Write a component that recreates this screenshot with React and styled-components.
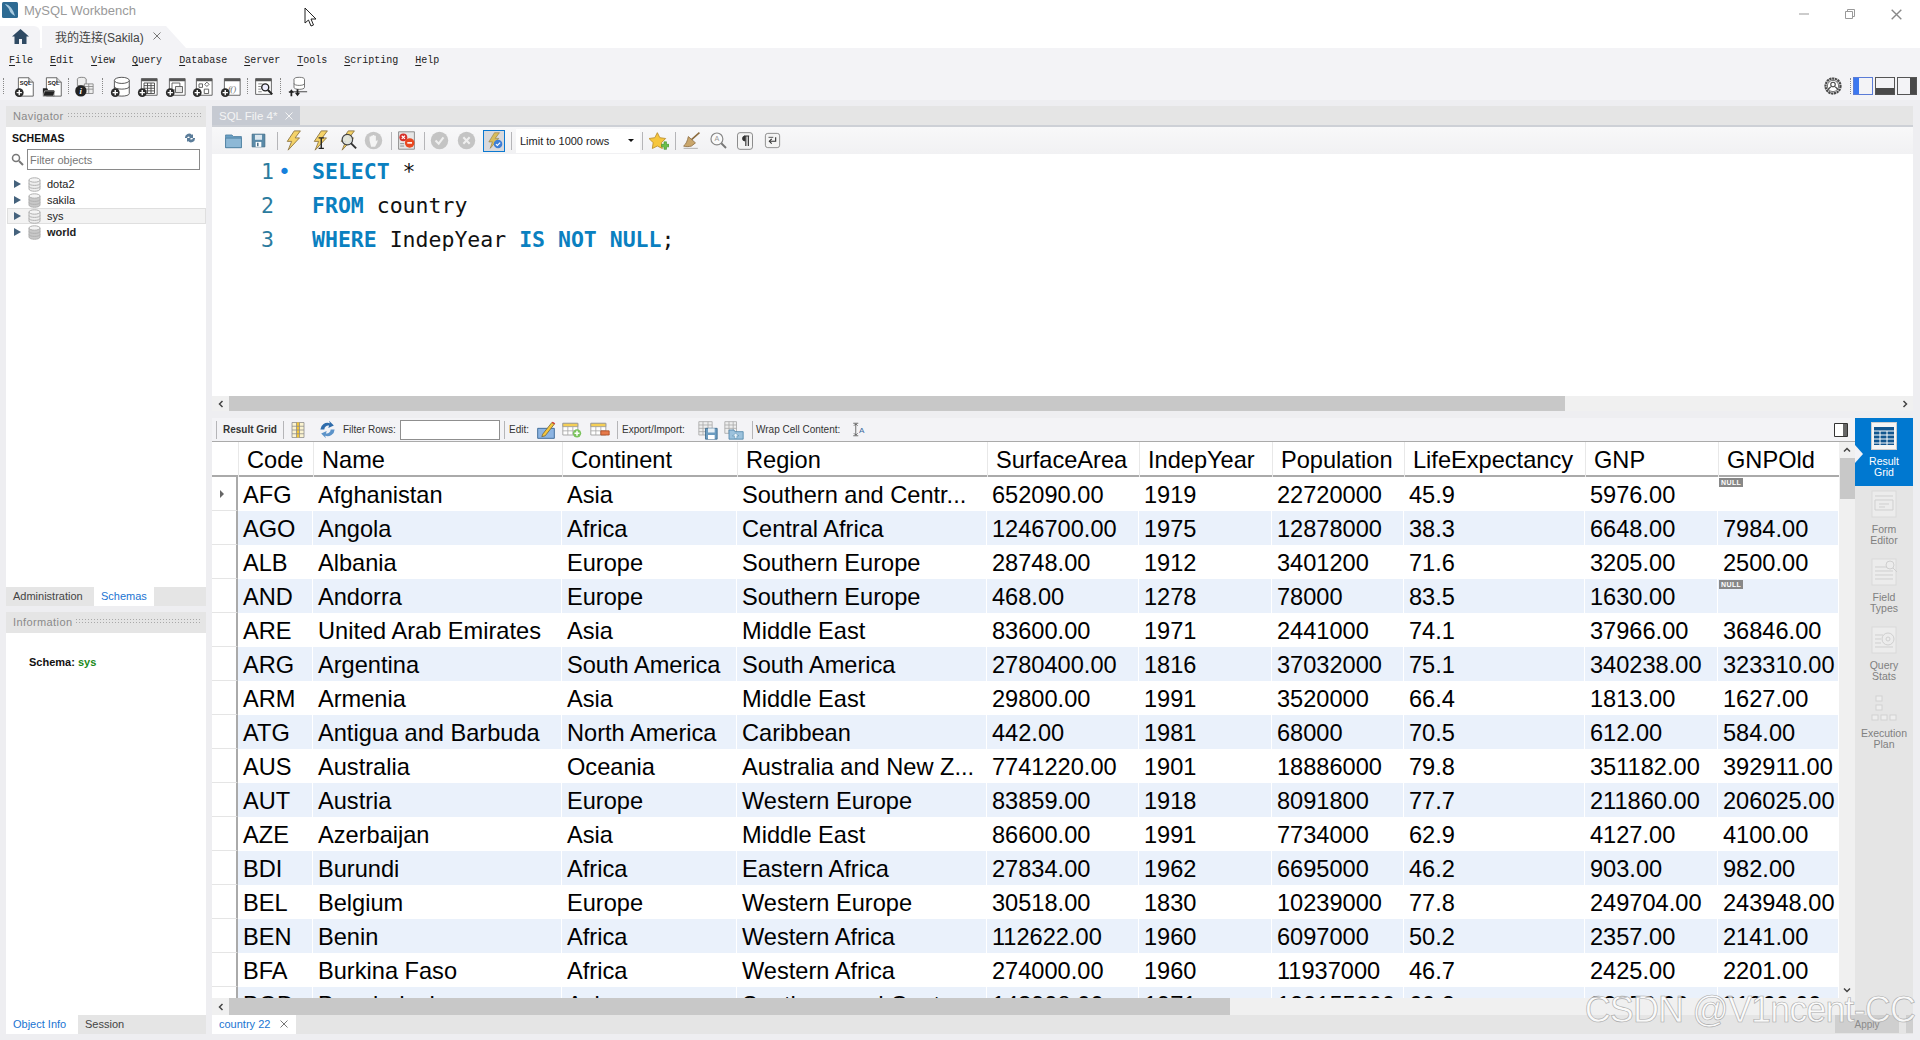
import React from 'react'
import styled, { createGlobalStyle } from 'styled-components'

const UI = '"Liberation Sans", "Noto Sans CJK SC", sans-serif'
const GRID_COLS = '26px 75px 249px 175px 250px 152px 133px 132px 181px 133px 121px'

const Global = createGlobalStyle`
    html, body { margin: 0; padding: 0; background: #eeeef1; }
    body { font-family: ${UI}; overflow: hidden; }
    * { box-sizing: border-box; }
`

const Page = styled.div`
    width: 1920px;
    height: 1040px;
    display: flex;
    flex-direction: column;
    position: relative;
    overflow: hidden;
    background: #eeeef1;
`, TitleBar = styled.div`
    height: 26px;
    display: flex;
    align-items: center;
    background: #fff;
    padding: 0 1px 6px 2px;
`, AppTitle = styled.div`
    margin-left: 6px;
    font-size: 13px;
    color: #9a9a9a;
`, WinControls = styled.div`
    margin-left: auto;
    display: flex;
`, WinBtn = styled.div`
    width: 46px;
    height: 28px;
    display: flex;
    align-items: center;
    justify-content: center;
    margin-top: 8px;
`, TabStrip = styled.div`
    height: 22px;
    display: flex;
    align-items: flex-end;
    background: #fff;
`, HomeTab = styled.div`
    width: 40px;
    height: 22px;
    padding-bottom: 2px;
    background: #f3f3f6;
    border-top-right-radius: 6px;
    display: flex;
    align-items: center;
    justify-content: center;
`, ConnTab = styled.div`
    width: 144px;
    height: 22px;
    margin-left: 2px;
    padding: 0 0 2px 13px;
    background: #f3f3f6;
    clip-path: polygon(0 0, 124px 0, 100% 100%, 0 100%);
    display: flex;
    align-items: center;
    font-size: 12px;
    color: #444;
`, TabClose = styled.span`
    margin-left: ${p => p.$l || 8}px;
    display: inline-flex;
`, MenuBar = styled.div`
    height: 24px;
    padding-left: 9px;
    display: flex;
    align-items: center;
    gap: 17px;
    background: #f3f3f6;
    font-family: "Liberation Mono", monospace;
    font-size: 10px;
    color: #222;
    span u { text-underline-offset: 2px; }
`, MainToolbar = styled.div`
    height: 28px;
    display: flex;
    align-items: center;
    padding: 0 3px;
    background: #f3f3f6;
`, Grip = styled.div`
    width: 1px;
    height: 16px;
    margin-left: ${p => p.$l || 0}px;
    border-left: 1px dotted #888;
`, Sep = styled.div`
    width: 1px;
    height: ${p => p.$h || 18}px;
    margin-left: ${p => p.$l || 0}px;
    background: #b5b5b8;
`, Slot = styled.div`
    width: ${p => p.$w || 27}px;
    margin-left: ${p => p.$l || 0}px;
    display: flex;
    align-items: center;
    justify-content: center;
    flex: none;
`, RightTools = styled.div`
    margin-left: auto;
    display: flex;
    align-items: center;
    gap: 2px;
`, Body = styled.div`
    flex: 1;
    display: flex;
    gap: 6px;
    padding: 6px 7px 6px 6px;
    min-height: 0;
`, LeftCol = styled.div`
    width: 200px;
    display: flex;
    flex-direction: column;
`, PaneHeader = styled.div`
    height: 21px;
    flex: none;
    display: flex;
    align-items: center;
    gap: 3px;
    padding: 0 5px 2px 7px;
    background: #e5e5e5;
    font-size: 11px;
    color: #8a8a8a;
    letter-spacing: 0.4px;
`, Dots = styled.div`
    flex: 1;
    height: 7px;
    background-image: radial-gradient(#a9a9a9 0.7px, transparent 0.8px);
    background-size: 3px 3px;
`, SchemaPanel = styled.div`
    height: 460px;
    flex: none;
    background: #fff;
    display: flex;
    flex-direction: column;
`, SchemaHead = styled.div`
    height: 22px;
    padding: 0 10px 0 6px;
    display: flex;
    align-items: center;
    justify-content: space-between;
    font-size: 10.5px;
    font-weight: bold;
    color: #111;
`, FilterRow = styled.div`
    height: 21px;
    display: flex;
    align-items: center;
    padding: 0 6px 0 5px;
    gap: 3px;
`, FilterInput = styled.div`
    flex: 1;
    height: 21px;
    padding-left: 2px;
    border: 1px solid #8a8a8a;
    font-size: 11px;
    line-height: 20px;
    color: #777;
`, Tree = styled.div`
    margin-top: 6px;
`, TreeRow = styled.div`
    height: 16px;
    display: flex;
    align-items: center;
    padding-left: 7px;
    gap: 6px;
    font-size: 11px;
    color: #222;
    font-weight: ${p => p.$bold ? 'bold' : 'normal'};
    background: ${p => p.$sel ? '#f3f3f3' : 'transparent'};
    box-shadow: ${p => p.$sel ? 'inset 0 0 0 1px #dfdfdf' : 'none'};
    margin-left: 1px;
`, TreeArrow = styled.div`
    width: 0;
    height: 0;
    margin-right: 1px;
    border-left: 7px solid #45627c;
    border-top: 4px solid transparent;
    border-bottom: 4px solid transparent;
`, SubTabs = styled.div`
    height: 19px;
    flex: none;
    display: flex;
    background: #e5e5e5;
    font-size: 11px;
`, SubTab = styled.div`
    width: ${p => p.$w}px;
    padding: 0 0 1px 7px;
    display: flex;
    align-items: center;
    white-space: nowrap;
    background: ${p => p.$on ? '#fff' : 'transparent'};
    color: ${p => p.$on ? '#1a74d2' : '#444'};
`, Spacer = styled.div`
    height: 6px;
    flex: none;
`, InfoBody = styled.div`
    flex: 1;
    background: #fff;
    padding: 23px 0 0 23px;
    font-size: 11px;
    font-weight: bold;
    color: #111;
    b { color: #1b8a1b; }
`, MainCol = styled.div`
    flex: 1;
    min-width: 0;
    display: flex;
    flex-direction: column;
`, SqlTabBar = styled.div`
    height: 21px;
    flex: none;
    background: #e5e5e5;
    border-bottom: 2px solid #cdd0d6;
`, SqlTab = styled.div`
    width: 88px;
    height: 19px;
    padding-left: 7px;
    display: flex;
    align-items: center;
    background: #c6cad2;
    color: #f4f4f4;
    font-size: 11.5px;
`, SqlToolbar = styled.div`
    height: 27px;
    flex: none;
    display: flex;
    align-items: center;
    padding-left: 8px;
    background: linear-gradient(#f8f8f9, #f1f1f3);
`, Toggle = styled.div`
    width: 22px;
    height: 22px;
    margin-left: 3px;
    display: flex;
    align-items: center;
    justify-content: center;
    border: 1px solid #0b78d0;
    background: #d9d9dc;
`, Combo = styled.div`
    width: 124px;
    height: 24px;
    margin-left: 4px;
    padding: 0 6px 0 4px;
    display: flex;
    align-items: center;
    justify-content: space-between;
    background: #fff;
    font-size: 11px;
    color: #222;
`, ComboArrow = styled.div`
    width: 0;
    height: 0;
    border-top: 3px solid #111;
    border-left: 3px solid transparent;
    border-right: 3px solid transparent;
`, Editor = styled.div`
    height: 242px;
    flex: none;
    padding-top: 1px;
    background: #fff;
    font-family: "DejaVu Sans Mono", monospace;
    font-size: 21.5px;
    line-height: 34px;
`, CodeLine = styled.div`
    display: flex;
    white-space: pre;
    color: #111;
    b { color: #0a80c0; }
`, LineNo = styled.span`
    width: 62px;
    text-align: right;
    color: #2b7b9e;
    font-weight: normal;
`, LineDot = styled.span`
    width: 38px;
    padding-left: 4px;
    color: #1580dc;
`, HScroll = styled.div`
    height: ${p => p.$h || 15}px;
    flex: none;
    display: flex;
    align-items: stretch;
    background: #f0f0f0;
`, ScrollArrow = styled.div`
    width: 17px;
    flex: none;
    display: flex;
    align-items: center;
    justify-content: center;
`, ScrollThumb = styled.div`
    width: ${p => p.$w}px;
    background: #c8c8c8;
`, ResultsArea = styled.div`
    flex: 1;
    min-height: 0;
    margin-top: 7px;
    display: flex;
`, ResultsMain = styled.div`
    flex: 1;
    min-width: 0;
    display: flex;
    flex-direction: column;
`, ResultToolbar = styled.div`
    height: 24px;
    flex: none;
    display: flex;
    align-items: center;
    background: #f3f3f6;
    border-bottom: 1px solid #aaa;
    padding-right: 7px;
`, BarLabel = styled.div`
    width: ${p => p.$w}px;
    margin-left: ${p => p.$l || 0}px;
    flex: none;
    white-space: nowrap;
    font-size: 10px;
    font-weight: ${p => p.$bold ? 'bold' : 'normal'};
    color: #333;
`, FilterBox = styled.div`
    width: 100px;
    height: 20px;
    margin-left: 5px;
    flex: none;
    background: #fff;
    border: 1px solid #8f8f8f;
`, GridWrap = styled.div`
    flex: 1;
    min-height: 0;
    display: flex;
`, Grid = styled.div`
    width: 1627px;
    overflow: hidden;
    background: #fff;
    font-family: "Liberation Sans", sans-serif;
    font-size: 23.6px;
    color: #000;
`, HeadRow = styled.div`
    height: 35px;
    display: grid;
    grid-template-columns: ${GRID_COLS};
    border-bottom: 2px solid #aaa;
`, HeadCell = styled.div`
    padding-left: 8px;
    line-height: 36px;
    white-space: nowrap;
    border-left: 1px solid #e8e8e8;
`, DataRow = styled.div`
    height: 34px;
    display: grid;
    grid-template-columns: ${GRID_COLS};
`, RowHead = styled.div`
    display: flex;
    align-items: center;
    padding-left: 8px;
    border-bottom: 1px solid #e5e5e5;
    border-right: 2px solid #aaa;
    background: #fff;
`, RowMark = styled.div`
    width: 0;
    height: 0;
    border-left: 4px solid #666;
    border-top: 4px solid transparent;
    border-bottom: 4px solid transparent;
`, Cell = styled.div`
    padding: 2px 0 0 5px;
    display: flex;
    align-items: center;
    white-space: nowrap;
    overflow: hidden;
    background: ${p => p.$alt ? '#eaf1fb' : '#fff'};
    border-right: 1px solid #fff;
`, NullBadge = styled.span`
    align-self: flex-start;
    margin: -1px 0 0 -4px;
    padding: 0 2px;
    height: 9px;
    line-height: 9px;
    background: #888;
    color: #fff;
    font-size: 7px;
    font-weight: bold;
    letter-spacing: 0.4px;
`, VScroll = styled.div`
    width: 16px;
    flex: none;
    display: flex;
    flex-direction: column;
    align-items: center;
    background: #f0f0f0;
`, VArrow = styled.div`
    height: 16px;
    flex: none;
    display: flex;
    align-items: center;
    justify-content: center;
`, VThumb = styled.div`
    width: 15px;
    height: 41px;
    background: #c8c8c8;
`, VFill = styled.div`
    flex: 1;
`, SidePanel = styled.div`
    width: 58px;
    flex: none;
    background: #e5e5e5;
`, SideItem = styled.div`
    height: 68px;
    display: flex;
    flex-direction: column;
    align-items: center;
    position: relative;
    padding-top: 4px;
    background: ${p => p.$on ? '#0078d0' : 'transparent'};
    color: ${p => p.$on ? '#fff' : '#808080'};
    font-size: 10.5px;
    line-height: 10.5px;
    text-align: center;
`, SideLabel = styled.div`
    margin-top: 6px;
`, Notch = styled.div`
    position: absolute;
    left: 0;
    top: 27px;
    width: 0;
    height: 0;
    border-left: 8px solid #f3f3f6;
    border-top: 9px solid transparent;
    border-bottom: 9px solid transparent;
`, BottomBar = styled.div`
    height: 19px;
    flex: none;
    display: flex;
    background: #e5e5e5;
`, ResultTab = styled.div`
    width: 84px;
    padding: 0 0 1px 7px;
    display: flex;
    align-items: center;
    background: #fff;
    color: #1a74d2;
    font-size: 11px;
`, ApplyBtn = styled.div`
    width: 64px;
    height: 18px;
    margin-left: auto;
    display: flex;
    align-items: center;
    justify-content: center;
    background: #cfcfcf;
    color: #8a8a8a;
    font-size: 10px;
`, RevertBtn = styled.div`
    width: 7px;
    height: 18px;
    margin-left: 7px;
    background: #cfcfcf;
`, Watermark = styled.div`
    position: absolute;
    right: 5px;
    bottom: 9px;
    font-family: "Liberation Sans", sans-serif;
    font-size: 36px;
    letter-spacing: -0.9px;
    color: rgba(255, 255, 255, 0.78);
    -webkit-text-stroke: 0.6px #a8a8a8;
    white-space: nowrap;
`, Cursor = styled.svg`
    position: absolute;
    left: 304px;
    top: 7px;
`, LayoutBtn = styled.div`
    width: 20px;
    height: 18px;
    flex: none;
    background: ${p => p.$bg};
    border: 1px solid ${p => p.$border};
`

// ---- drawings

const S = ({ s = 21, w = 24, h, children }) => <svg width={s} height={h ? s * h / w : s} viewBox={`0 0 ${w} ${h || w}`}>{children}</svg>

const PlusBadge = ({ x = 6, y = 19 }) => <g>
    <circle cx={x} cy={y} r="5" fill="#2b2b2b" />
    <path d={`M${x - 3} ${y}h6M${x} ${y - 3}v6`} stroke="#fff" strokeWidth="1.6" />
</g>

const SqlDoc = () => <g>
    <path d="M5 2h12l5 5v16H5z" fill="#fff" stroke="#555" />
    <path d="M17 2v5h5" fill="#ddd" stroke="#555" />
    <text x="6.5" y="10" fontSize="6.5" fontWeight="bold" fontFamily="Liberation Sans" fill="#222">SQL</text>
</g>

const NewSql = () => <S><SqlDoc /><PlusBadge /></S>
const OpenSql = () => <S><SqlDoc /><path d="M1 14h5l1 2h7v7H1z" fill="#222" /><path d="M3 17h12l-2 6H1z" fill="#222" stroke="#fff" strokeWidth=".6" /></S>
const InfoDb = () => <S>
    <ellipse cx="10" cy="4" rx="5" ry="2.5" fill="#eee" stroke="#777" />
    <path d="M5 4v7h10V4" fill="#eee" stroke="#777" />
    <path d="M13 9h10v11H13z" fill="#eee" stroke="#888" /><path d="M13 12h10M13 15h10M18 9v11" stroke="#888" />
    <circle cx="9" cy="17" r="6.5" fill="#222" />
    <text x="7.4" y="21" fontSize="10" fontWeight="bold" fontStyle="italic" fontFamily="Liberation Serif" fill="#fff">i</text>
</S>
const NewDb = () => <S>
    <path d="M5 5v15c0 4 17 4 17 0V5" fill="#fff" stroke="#444" />
    <ellipse cx="13.5" cy="5" rx="8.5" ry="3.5" fill="#fff" stroke="#444" />
    <path d="M5 12c0 4 17 4 17 0" fill="none" stroke="#444" />
    <PlusBadge />
</S>
const Frame = ({ children }) => <g>
    <path d="M5 3h18v19H5z" fill="#fff" stroke="#555" />
    <path d="M5 3h18v3H5z" fill="#555" />
    {children}
</g>
const NewTable = () => <S><Frame><path d="M8 8h12v12H8z" fill="none" stroke="#444" /><path d="M8 11h12M8 14h12M8 17h12M12 8v12M16 8v12" stroke="#444" /></Frame><PlusBadge /></S>
const NewView = () => <S><Frame><path d="M8 8h9v8H8z" fill="none" stroke="#555" /><path d="M12 12h8v7h-8z" fill="#e6e6e6" stroke="#555" /></Frame><PlusBadge /></S>
const NewProc = () => <S><Frame><path d="M8 9h4v4H8zM14 15h5v5h-5z" fill="none" stroke="#555" /><path d="M17 7l2.500 2.500-2.500 2.500-2.500-2.500z" fill="none" stroke="#555" /></Frame><PlusBadge /></S>
const NewFunc = () => <S><Frame><text x="9" y="18" fontSize="10" fontFamily="Liberation Serif" fontStyle="italic" fill="#666">f()</text></Frame><PlusBadge /></S>
const Inspect = () => <S>
    <path d="M3 3h18v18H3z" fill="#fff" stroke="#555" /><path d="M3 3h18v3H3z" fill="#555" />
    <path d="M6 9h5M6 12h3M6 15h3M6 18h4" stroke="#777" />
    <circle cx="14" cy="13" r="4" fill="#eef" stroke="#222" strokeWidth="1.6" /><path d="M17 16l5 5" stroke="#222" strokeWidth="2.4" />
</S>
const Reconnect = () => <S>
    <ellipse cx="14" cy="4" rx="6" ry="2.5" fill="#fff" stroke="#666" />
    <path d="M8 4v9c0 3 12 3 12 0V4" fill="#fff" stroke="#666" /><path d="M8 8.500c0 3 12 3 12 0" fill="none" stroke="#666" />
    <path d="M2 18h21" stroke="#333" /><path d="M5 15l-3 4h2v4h2v-4h2zM12 23l3-4h-2v-4h-2v4H9z" fill="#222" />
</S>
const Folder = () => <S s={19}><path d="M2 5h8l2 2h10v14H2z" fill="#6a9fc4" stroke="#4c7e9f" /><path d="M2 9h20v12H2z" fill="#8db8d6" stroke="#4c7e9f" /></S>
const Floppy = () => <S s={17}><path d="M3 3h18v18H3z" fill="#5a8aa8" stroke="#3c6681" /><path d="M7 4h10v7H7z" fill="#dbe7ef" /><path d="M8 14h8v7H8z" fill="#fff" /><path d="M10 15h2v5h-2z" fill="#3c6681" /></S>
const BoltShape = () => <path d="M14 1h7l-6 8h5L7 23l4-10H6z" fill="#f4d268" stroke="#8b7440" strokeWidth="1" />
const Bolt = () => <S><BoltShape /></S>
const BoltCursor = () => <S><BoltShape /><path d="M11 9h6M14 9v12M11 21h6" stroke="#222" strokeWidth="1.6" /></S>
const BoltLens = () => <S><BoltShape /><circle cx="13" cy="11" r="6" fill="#dfe9ef" fillOpacity=".85" stroke="#444" strokeWidth="1.4" /><path d="M17 15l6 6" stroke="#333" strokeWidth="2.2" /></S>
const Hand = () => <S s={19}><circle cx="12" cy="12" r="11" fill="#c6c6c6" /><path d="M7 12V7h2v4-5h2v5-6h2v6-5h2v7l2-2v3l-3 6H9z" fill="#f4f4f4" /></S>
const RedStop = () => <S s={19}>
    <path d="M2 1h20v22H2z" fill="#e6e6e6" stroke="#777" />
    <circle cx="8" cy="8" r="5" fill="#d7302a" /><path d="M6 6l4 4M10 6l-4 4" stroke="#fff" strokeWidth="1.4" />
    <circle cx="16" cy="15" r="6" fill="#e8471f" /><path d="M13 15h6" stroke="#fff" strokeWidth="2" />
    <path d="M4 16h5M4 19h5" stroke="#777" />
</S>
const Check = () => <S s={19}><circle cx="12" cy="12" r="11" fill="#c4c4c4" /><path d="M7 12l4 4 6-8" fill="none" stroke="#efefef" strokeWidth="2.600" /></S>
const Cross = () => <S s={19}><circle cx="12" cy="12" r="11" fill="#c4c4c4" /><path d="M8 8l8 8M16 8l-8 8" stroke="#efefef" strokeWidth="2.600" /></S>
const AutoCommit = () => <S s={17}><path d="M12 1h7l-6 8h5L6 23l3-9H4z" fill="#d9bd5a" stroke="#8b7440" strokeWidth=".8" /><circle cx="17" cy="17" r="6" fill="#3d7fd8" /><path d="M14 17l2 2 4-4" fill="none" stroke="#fff" strokeWidth="1.600" /></S>
const Star = () => <S s={20}><path d="M10 2l3 6 7 1-5 5 1 7-6-3-6 3 1-7-5-5 7-1z" fill="#f6c63c" stroke="#b98d2a" /><path d="M15 16h3v-3h3v3h3v3h-3v3h-3v-3h-3z" fill="#6cbf4a" stroke="#3f8d2b" strokeWidth=".7" /></S>
const Broom = () => <S s={19}><path d="M22 2L12 11" stroke="#8b6b3e" strokeWidth="2" /><path d="M8 7l9 8-5 4c-3 1-8 1-10 0 3-2 5-7 6-12z" fill="#c9a66b" stroke="#8b6b3e" /><path d="M2 22h18" stroke="#bbb" strokeWidth="1.500" /></S>
const LensA = () => <S s={19}><circle cx="10" cy="10" r="7.500" fill="#fafafa" stroke="#888" strokeWidth="1.500" /><path d="M15.500 15.500l6 6" stroke="#777" strokeWidth="2.400" /><text x="6.800" y="13" fontSize="9" fontFamily="Liberation Sans" fill="#999">A</text></S>
const Pilcrow = () => <S s={20}><rect x="3" y="2" width="18" height="20" rx="3" fill="#f4f4f4" stroke="#777" /><path d="M11 6h6M13 6v12M16 6v12" stroke="#333" strokeWidth="1.400" /><path d="M12 6a3 3 0 0 0 0 6z" fill="#333" stroke="#333" /></S>
const WrapBox = () => <S s={19}><rect x="3" y="3" width="18" height="18" rx="3" fill="#f4f4f4" stroke="#777" /><path d="M16 8v5H9" fill="none" stroke="#333" strokeWidth="1.400" /><path d="M11 10l-3 3 3 3" fill="none" stroke="#333" strokeWidth="1.400" /><path d="M7 8h6" stroke="#333" /></S>
const GridYellow = () => <S s={18}><path d="M4 2h16v20H4z" fill="#fbf3d0" stroke="#8a8a8a" /><path d="M10 2h4v20h-4z" fill="#f2c53a" /><path d="M4 7h16M4 12h16M4 17h16M10 2v20M14 2v20" stroke="#8a8a8a" /></S>
const Refresh = () => <S s={19}><path d="M3 12a9 9 0 0 1 12-8l-1-3 6 6-7 3 1-3a5 5 0 0 0-6 5z" fill="#2f6cab" /><path d="M21 12a9 9 0 0 1-12 8l1 3-6-6 7-3-1 3a5 5 0 0 0 6-5z" fill="#5c93c9" /></S>
const EditPencil = () => <S s={20}><path d="M2 10h20v12H2z" fill="#8db4e2" stroke="#2d5c8d" /><path d="M8 17L19 3l3 2-11 14-4 1z" fill="#f6c63c" stroke="#7a6a3a" /><path d="M19 3l1-1 3 2-1 1z" fill="#d7302a" /></S>
const BaseGrid = ({ color }) => <g>
    <path d="M1 4h18v14H1z" fill="#fff" stroke="#999" /><path d="M1 4h18v4H1z" fill={color} stroke="#999" />
    <path d="M1 13h18M7 8v10M13 8v10" stroke="#aaa" />
</g>
const RowAdd = () => <S s={20}><BaseGrid color="#f5cf55" /><circle cx="18" cy="16" r="5" fill="#7ac35c" /><path d="M15 16h6M18 13v6" stroke="#fff" strokeWidth="1.800" /></S>
const RowDel = () => <S s={20}><BaseGrid color="#f5cf55" /><path d="M13 13h10v5H13z" fill="#e67a4b" stroke="#a84a23" /></S>
const ExportGrid = () => <S s={20}><path d="M1 2h16v16H1z" fill="#eee" stroke="#aaa" /><path d="M1 6h16M1 10h16M1 14h16M6 2v16M12 2v16" stroke="#aaa" /><path d="M9 10h14v13H9z" fill="#6c9cc0" stroke="#39688a" /><path d="M12 10h8v5h-8z" fill="#e7eff5" /><path d="M12 18h8v5h-8z" fill="#fff" /></S>
const ImportGrid = () => <S s={20}><path d="M1 2h14v14H1z" fill="#eee" stroke="#aaa" /><path d="M1 6h14M1 10h14M6 2v14M11 2v14" stroke="#aaa" /><path d="M6 12h6l1 2h10v9H6z" fill="#9cc2dd" stroke="#4f86aa" /><path d="M14 16l4 3h-2.500v3h-3v-3H10z" fill="#eaf3f9" stroke="#4f86aa" strokeWidth=".6" /></S>
const WrapText = () => <S s={15}><path d="M6 3v18M3 6l3-3 3 3M3 18l3 3 3-3M2 2h8M2 22h8" fill="none" stroke="#444" strokeWidth="1.200" /><text x="11" y="18" fontSize="13" fontFamily="Liberation Sans" fill="#3a6aa0">A</text></S>
const Gear = () => <S s={18}><circle cx="12" cy="12" r="10" fill="none" stroke="#4a4a4a" strokeWidth="3" strokeDasharray="3 .8" /><circle cx="12" cy="12" r="7.500" fill="#fff" stroke="#4a4a4a" /><circle cx="12" cy="10" r="3" fill="none" stroke="#4a4a4a" strokeWidth="1.500" /><path d="M5 17l4-4M19 17l-4-4" stroke="#4a4a4a" strokeWidth="1.500" /></S>

const ResultCard = () => <svg width="26" height="28" viewBox="0 0 26 28">
    <rect x=".5" y=".5" width="25" height="27" fill="#f5f5f5" stroke="#ccc" />
    <path d="M3 5h20v18H3z" fill="#12568f" />
    <path d="M3 9h20M3 13h20M3 17h20M3 21h20M9 9v14M16 9v14" stroke="#fff" />
</svg>
const GrayCard = ({ children }) => <svg width="30" height="28" viewBox="0 0 30 28">
    <rect x="3" y="1" width="24" height="26" fill="#ececec" stroke="#dadada" />
    <g fill="none" stroke="#cfcfcf">{children}</g>
</svg>
const FormIcon = () => <GrayCard><path d="M6 6h18M6 10h18v10H6zM10 14h10M10 17h6" /></GrayCard>
const TypesIcon = () => <GrayCard><path d="M6 9h12M6 13h18M6 17h18M6 21h18" /><circle cx="21" cy="7" r="4" /><path d="M24 10l4 4" /></GrayCard>
const StatsIcon = () => <GrayCard><path d="M6 9h8M6 13h6M6 17h6M6 21h18" /><circle cx="19" cy="13" r="6" /><circle cx="19" cy="13" r="2" /></GrayCard>
const PlanIcon = () => <svg width="30" height="28" viewBox="0 0 30 28"><g fill="#eee" stroke="#d2d2d2"><rect x="7" y="2" width="6" height="5" /><rect x="7" y="11" width="6" height="5" /><rect x="3" y="21" width="6" height="5" /><rect x="12" y="21" width="6" height="5" /><rect x="21" y="21" width="6" height="5" /></g></svg>

const CloseX = ({ c = '#777', s = 8 }) => <svg width={s} height={s} viewBox="0 0 8 8"><path d="M.5.5l7 7M7.500.5l-7 7" stroke={c} /></svg>
const Chevron = ({ d, c = '#444' }) => <svg width="8" height="8" viewBox="0 0 8 8"><path d={d} fill="none" stroke={c} strokeWidth="1.500" /></svg>
const DbIcon = ({ c }) => <svg width="13" height="15" viewBox="0 0 13 15">
    <path d="M1 3v9c0 3 11 3 11 0V3" fill={c} stroke="#b0b0b0" />
    <ellipse cx="6.500" cy="3" rx="5.500" ry="2.200" fill="#f4f4f4" stroke="#b0b0b0" />
    <path d="M1 6.500c0 2.500 11 2.500 11 0M1 9.500c0 2.500 11 2.500 11 0" fill="none" stroke="#b0b0b0" />
</svg>

const menu = ['File', 'Edit', 'View', 'Query', 'Database', 'Server', 'Tools', 'Scripting', 'Help']
const columns = ['Code', 'Name', 'Continent', 'Region', 'SurfaceArea', 'IndepYear', 'Population', 'LifeExpectancy', 'GNP', 'GNPOld']
const rows = [
    ['AFG', 'Afghanistan', 'Asia', 'Southern and Centr...', '652090.00', '1919', '22720000', '45.9', '5976.00', null],
    ['AGO', 'Angola', 'Africa', 'Central Africa', '1246700.00', '1975', '12878000', '38.3', '6648.00', '7984.00'],
    ['ALB', 'Albania', 'Europe', 'Southern Europe', '28748.00', '1912', '3401200', '71.6', '3205.00', '2500.00'],
    ['AND', 'Andorra', 'Europe', 'Southern Europe', '468.00', '1278', '78000', '83.5', '1630.00', null],
    ['ARE', 'United Arab Emirates', 'Asia', 'Middle East', '83600.00', '1971', '2441000', '74.1', '37966.00', '36846.00'],
    ['ARG', 'Argentina', 'South America', 'South America', '2780400.00', '1816', '37032000', '75.1', '340238.00', '323310.00'],
    ['ARM', 'Armenia', 'Asia', 'Middle East', '29800.00', '1991', '3520000', '66.4', '1813.00', '1627.00'],
    ['ATG', 'Antigua and Barbuda', 'North America', 'Caribbean', '442.00', '1981', '68000', '70.5', '612.00', '584.00'],
    ['AUS', 'Australia', 'Oceania', 'Australia and New Z...', '7741220.00', '1901', '18886000', '79.8', '351182.00', '392911.00'],
    ['AUT', 'Austria', 'Europe', 'Western Europe', '83859.00', '1918', '8091800', '77.7', '211860.00', '206025.00'],
    ['AZE', 'Azerbaijan', 'Asia', 'Middle East', '86600.00', '1991', '7734000', '62.9', '4127.00', '4100.00'],
    ['BDI', 'Burundi', 'Africa', 'Eastern Africa', '27834.00', '1962', '6695000', '46.2', '903.00', '982.00'],
    ['BEL', 'Belgium', 'Europe', 'Western Europe', '30518.00', '1830', '10239000', '77.8', '249704.00', '243948.00'],
    ['BEN', 'Benin', 'Africa', 'Western Africa', '112622.00', '1960', '6097000', '50.2', '2357.00', '2141.00'],
    ['BFA', 'Burkina Faso', 'Africa', 'Western Africa', '274000.00', '1960', '11937000', '46.7', '2425.00', '2201.00'],
    ['BGD', 'Bangladesh', 'Asia', 'Southern and Centr...', '143998.00', '1971', '129155000', '60.2', '32852.00', '31966.00'],
]

export default function App() {
    return (
        <Page>
            <Global />
            <TitleBar>
                <svg width="16" height="16" viewBox="0 0 16 16"><rect width="16" height="16" rx="1.500" fill="#2d6a92" /><path d="M3 2c5 1 8 5 10 12-3-2-5-3-6-7-1-2-3-3-4-5z" fill="#a9cbe0" /></svg>
                <AppTitle>MySQL Workbench</AppTitle>
                <WinControls>
                    <WinBtn><svg width="10" height="2"><path d="M0 1h10" stroke="#999" /></svg></WinBtn>
                    <WinBtn><svg width="10" height="10"><path d="M2.500 2.500V.5h7v7h-2M.5 2.500h7v7h-7z" fill="none" stroke="#999" /></svg></WinBtn>
                    <WinBtn><CloseX c="#888" s={11} /></WinBtn>
                </WinControls>
            </TitleBar>
            <TabStrip>
                <HomeTab><svg width="17" height="15" viewBox="0 0 17 15"><path d="M8.500 0L17 7.500h-2.500V15H10v-5H7v5H2.500V7.500H0z" fill="#2f4a63" /></svg></HomeTab>
                <ConnTab>我的连接(Sakila)<TabClose $l={9}><CloseX /></TabClose></ConnTab>
            </TabStrip>
            <MenuBar>
                {menu.map(m => <span key={m}><u>{m[0]}</u>{m.slice(1)}</span>)}
            </MenuBar>
            <MainToolbar>
                <Grip />
                <Slot $l={6} $w={28}><NewSql /></Slot>
                <Slot $w={28}><OpenSql /></Slot>
                <Grip $l={2} />
                <Slot $l={1}><InfoDb /></Slot>
                <Grip $l={5} />
                <Slot $l={4}><NewDb /></Slot>
                <Slot $w={27.5}><NewTable /></Slot>
                <Slot $w={27.5}><NewView /></Slot>
                <Slot $w={27.5}><NewProc /></Slot>
                <Slot $w={27.5}><NewFunc /></Slot>
                <Grip $l={3} />
                <Slot $l={2}><Inspect /></Slot>
                <Grip $l={3} />
                <Slot $l={3}><Reconnect /></Slot>
                <RightTools>
                    <Gear />
                    <Grip $l={6} />
                    <LayoutBtn $bg="linear-gradient(90deg, #3c78f0 30%, #f3f3f6 30%)" $border="#5a7bd6" />
                    <LayoutBtn $bg="linear-gradient(#f3f3f6 60%, #4a4a4a 60%)" $border="#555" />
                    <LayoutBtn $bg="linear-gradient(90deg, #f3f3f6 68%, #4a4a4a 68%)" $border="#555" />
                </RightTools>
            </MainToolbar>
            <Body>
                <LeftCol>
                    <PaneHeader>Navigator<Dots /></PaneHeader>
                    <SchemaPanel>
                        <SchemaHead>SCHEMAS<svg width="12" height="10" viewBox="0 0 12 10"><path d="M1 5a4 4 0 0 1 7-3l1-1v4H5l1-1a2 2 0 0 0-3 1z" fill="#5b7d9a" /><path d="M11 5a4 4 0 0 1-7 3L3 9V5h4L6 6a2 2 0 0 0 3-1z" fill="#5b7d9a" /></svg></SchemaHead>
                        <FilterRow>
                            <svg width="13" height="13" viewBox="0 0 13 13"><circle cx="5" cy="5" r="3.500" fill="none" stroke="#777" strokeWidth="1.500" /><path d="M8 8l4 4" stroke="#777" strokeWidth="2" /></svg>
                            <FilterInput>Filter objects</FilterInput>
                        </FilterRow>
                        <Tree>
                            <TreeRow><TreeArrow /><DbIcon c="#eee" />dota2</TreeRow>
                            <TreeRow><TreeArrow /><DbIcon c="#c8c8c8" />sakila</TreeRow>
                            <TreeRow $sel><TreeArrow /><DbIcon c="#eee" />sys</TreeRow>
                            <TreeRow $bold><TreeArrow /><DbIcon c="#c8c8c8" />world</TreeRow>
                        </Tree>
                    </SchemaPanel>
                    <SubTabs>
                        <SubTab $w={88}>Administration</SubTab>
                        <SubTab $w={60} $on>Schemas</SubTab>
                    </SubTabs>
                    <Spacer />
                    <PaneHeader>Information<Dots /></PaneHeader>
                    <InfoBody>Schema: <b>sys</b></InfoBody>
                    <SubTabs>
                        <SubTab $w={72} $on>Object Info</SubTab>
                        <SubTab $w={60}>Session</SubTab>
                    </SubTabs>
                </LeftCol>
                <MainCol>
                    <SqlTabBar>
                        <SqlTab>SQL File 4*<TabClose $l={8}><CloseX c="#f4f4f4" /></TabClose></SqlTab>
                    </SqlTabBar>
                    <SqlToolbar>
                        <Slot $w={26}><Folder /></Slot>
                        <Slot $w={25}><Floppy /></Slot>
                        <Sep $l={6} />
                        <Slot $l={1}><Bolt /></Slot>
                        <Slot><BoltCursor /></Slot>
                        <Slot><BoltLens /></Slot>
                        <Slot><Hand /></Slot>
                        <Sep $l={4} />
                        <Slot $l={1}><RedStop /></Slot>
                        <Sep $l={4} />
                        <Slot $l={1}><Check /></Slot>
                        <Slot><Cross /></Slot>
                        <Toggle><AutoCommit /></Toggle>
                        <Sep $l={6} />
                        <Combo>Limit to 1000 rows<ComboArrow /></Combo>
                        <Sep $l={2} />
                        <Slot $l={2}><Star /></Slot>
                        <Sep $l={3} />
                        <Slot $l={2}><Broom /></Slot>
                        <Slot $w={26}><LensA /></Slot>
                        <Slot><Pilcrow /></Slot>
                        <Slot $w={28}><WrapBox /></Slot>
                    </SqlToolbar>
                    <Editor>
                        <CodeLine><LineNo>1</LineNo><LineDot>•</LineDot><b>SELECT</b> *</CodeLine>
                        <CodeLine><LineNo>2</LineNo><LineDot /><b>FROM</b> country</CodeLine>
                        <CodeLine><LineNo>3</LineNo><LineDot /><b>WHERE</b> IndepYear <b>IS NOT NULL</b>;</CodeLine>
                    </Editor>
                    <HScroll>
                        <ScrollArrow><Chevron d="M5.500 1L2.500 4l3 3" /></ScrollArrow>
                        <ScrollThumb $w={1336} />
                        <VFill />
                        <ScrollArrow><Chevron d="M2.500 1l3 3-3 3" /></ScrollArrow>
                    </HScroll>
                    <ResultsArea>
                        <ResultsMain>
                            <ResultToolbar>
                                <Sep $l={4} />
                                <BarLabel $l={6} $w={55} $bold>Result Grid</BarLabel>
                                <Sep $l={5} />
                                <Slot $w={28}><GridYellow /></Slot>
                                <Slot $w={28} $l={1}><Refresh /></Slot>
                                <BarLabel $l={2} $w={52}>Filter Rows:</BarLabel>
                                <FilterBox />
                                <Sep $l={4} />
                                <BarLabel $l={4} $w={21}>Edit:</BarLabel>
                                <Slot $l={3} $w={26}><EditPencil /></Slot>
                                <Slot $w={26}><RowAdd /></Slot>
                                <Slot $l={2} $w={26}><RowDel /></Slot>
                                <Sep $l={4} />
                                <BarLabel $l={4} $w={68}>Export/Import:</BarLabel>
                                <Slot $l={5} $w={26}><ExportGrid /></Slot>
                                <Slot $w={26}><ImportGrid /></Slot>
                                <Sep $l={5} />
                                <BarLabel $l={3} $w={87}>Wrap Cell Content:</BarLabel>
                                <Slot $l={3} $w={26}><WrapText /></Slot>
                                <RightTools>
                                    <svg width="14" height="14" viewBox="0 0 14 14"><path d="M.5.5h13v13H.5z" fill="#fff" stroke="#333" /><path d="M9 1h4v12H9z" fill="#666" /></svg>
                                </RightTools>
                            </ResultToolbar>
                            <GridWrap>
                                <Grid>
                                    <HeadRow>
                                        <div />
                                        {columns.map(c => <HeadCell key={c}>{c}</HeadCell>)}
                                    </HeadRow>
                                    {rows.map((r, i) => <DataRow key={r[0]}>
                                        <RowHead>{i === 0 && <RowMark />}</RowHead>
                                        {r.map((v, j) => <Cell key={j} $alt={i % 2 === 1}>
                                            {v === null ? <NullBadge>NULL</NullBadge> : v}
                                        </Cell>)}
                                    </DataRow>)}
                                </Grid>
                                <VScroll>
                                    <VArrow><Chevron d="M1 5.500L4 2.500l3 3" /></VArrow>
                                    <VThumb />
                                    <VFill />
                                    <VArrow><Chevron d="M1 2.500L4 5.500l3-3" /></VArrow>
                                </VScroll>
                            </GridWrap>
                            <HScroll $h={17}>
                                <ScrollArrow><Chevron d="M5.500 1L2.500 4l3 3" /></ScrollArrow>
                                <ScrollThumb $w={1001} />
                            </HScroll>
                        </ResultsMain>
                        <SidePanel>
                            <SideItem $on>
                                <Notch />
                                <ResultCard />
                                <SideLabel>Result<br />Grid</SideLabel>
                            </SideItem>
                            <SideItem><FormIcon /><SideLabel>Form<br />Editor</SideLabel></SideItem>
                            <SideItem><TypesIcon /><SideLabel>Field<br />Types</SideLabel></SideItem>
                            <SideItem><StatsIcon /><SideLabel>Query<br />Stats</SideLabel></SideItem>
                            <SideItem><PlanIcon /><SideLabel>Execution<br />Plan</SideLabel></SideItem>
                        </SidePanel>
                    </ResultsArea>
                    <BottomBar>
                        <ResultTab>country 22<TabClose $l={10}><CloseX /></TabClose></ResultTab>
                        <ApplyBtn>Apply</ApplyBtn>
                        <RevertBtn />
                    </BottomBar>
                </MainCol>
            </Body>
            <Watermark>CSDN @V1ncent-CC</Watermark>
            <Cursor width="14" height="20" viewBox="0 0 14 20"><path d="M1 1v15l3.500-3 2.500 6 2.500-1-2.500-6h5z" fill="#fff" stroke="#222" /></Cursor>
        </Page>
    )
}
